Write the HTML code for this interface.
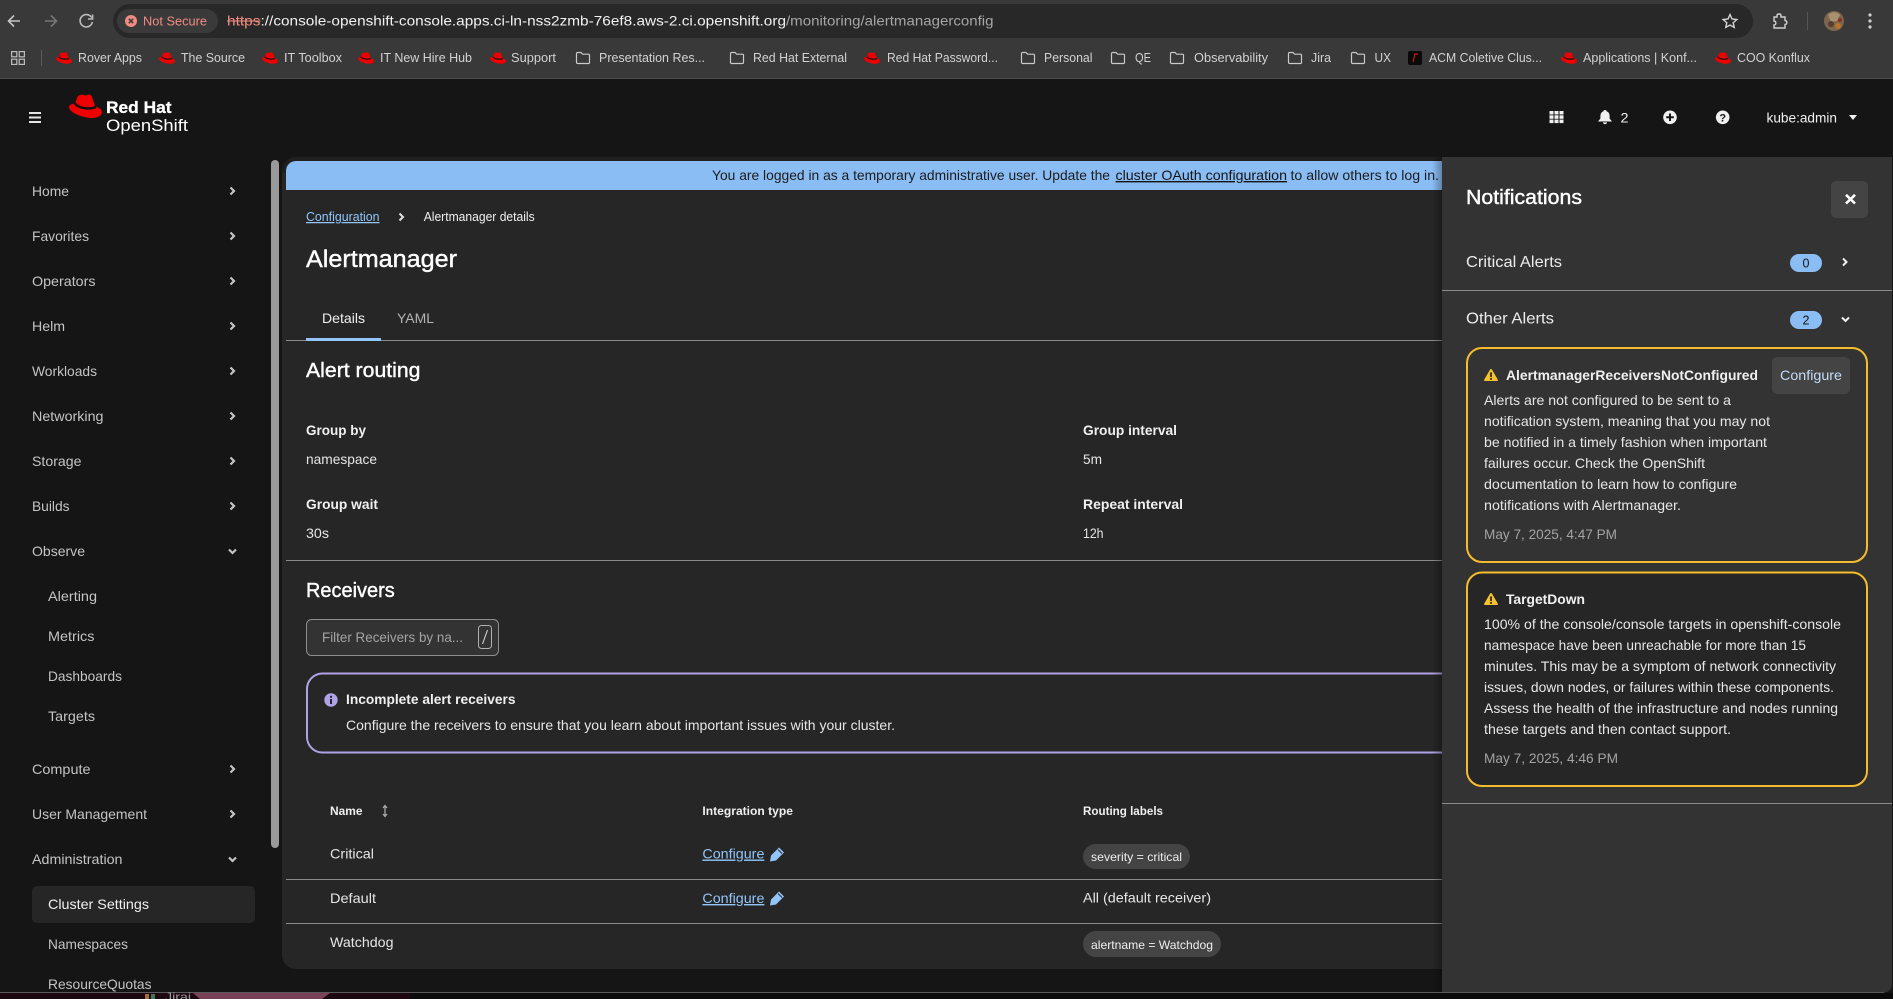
<!DOCTYPE html>
<html lang="en">
<head>
<meta charset="utf-8">
<title>Alertmanager · OpenShift</title>
<style>
html,body{margin:0;padding:0;background:#151515;width:1893px;height:999px;overflow:hidden}
svg{display:block;position:absolute;left:0;top:0}
text{font-family:"Liberation Sans",sans-serif;white-space:pre}
.bm{font-size:12.5px;fill:#d2d2d2}
.nav{font-size:14px;fill:#c4c4c4}
.sub{font-size:14px;fill:#c4c4c4}
.b{font-size:14px;fill:#e6e6e6}
.t{font-size:14px;fill:#f0f0f0;font-weight:700}
.h{fill:#fff;stroke:#fff;stroke-width:.4}
.g{font-size:14px;fill:#a3a3a3}
.link{font-size:14px;fill:#92c5f9;text-decoration:underline}
.th{font-size:12px;fill:#eee;font-weight:700}
.chev{fill:none;stroke:#c4c4c4;stroke-width:2.2}
.fold{fill:none;stroke:#c9c9c9;stroke-width:1.2}
.ln{fill:#8a8a8a}
</style>
</head>
<body>
<svg width="1893" height="999" viewBox="0 0 1893 999" xmlns="http://www.w3.org/2000/svg">
<defs>
<symbol id="hat" viewBox="0 0 33 24" overflow="visible">
<path fill="#ee0000" d="M11 1C14 0 15 1.500 17 1.500 19 0 22 0 23 3L26 12C29 13.500 33 15 33 18 33 22 28 24 23 24 15 24 0 19 0 13 0 11 3 9.500 6 10L8 4C8.500 2.500 9.500 1.500 11 1Z"/>
<path fill="none" stroke="#111" stroke-width="2.400" d="M6 9.500C9 14 20 16 27 13"/>
</symbol>
<symbol id="folder" viewBox="0 0 16 14" overflow="visible">
<path class="fold" d="M1.5 2.6C1.5 1.9 2 1.5 2.6 1.5H6L7.6 3.2H13.4C14 3.2 14.5 3.7 14.5 4.3V11.4C14.5 12 14 12.5 13.4 12.5H2.6C2 12.5 1.5 12 1.5 11.4Z"/>
</symbol>
<symbol id="warn" viewBox="0 0 14 12" overflow="visible">
<path fill="#f5c12e" d="M7 0C7.4 0 7.7.2 7.9.5L13.8 10.6C14.2 11.2 13.7 12 13 12H1C.3 12-.2 11.2.2 10.6L6.1.5C6.3.2 6.6 0 7 0Z"/>
<rect x="6.1" y="3.4" width="1.8" height="4.6" fill="#2a2a2a"/>
<rect x="6.1" y="9" width="1.8" height="1.8" fill="#2a2a2a"/>
</symbol>
<linearGradient id="sh" x1="0" x2="1" y1="0" y2="0"><stop offset="0" stop-color="#000" stop-opacity="0"/><stop offset="1" stop-color="#000" stop-opacity=".3"/></linearGradient>
</defs>

<!-- Browser chrome -->
<rect width="1893" height="79" fill="#393939"/>
<rect y="78" width="1893" height="1" fill="#4c4c4c"/>
<path d="M20 21H9M14 15.5L8.5 21 14 26.5" fill="none" stroke="#c4c4c4" stroke-width="1.6"/>
<path d="M45 21H56M51 15.5L56.5 21 51 26.5" fill="none" stroke="#777" stroke-width="1.6"/>
<path d="M91.6 17.5A6.2 6.2 0 1 0 92.4 22" fill="none" stroke="#bdbdbd" stroke-width="1.6"/>
<path d="M92.6 14.5V19H88" fill="none" stroke="#bdbdbd" stroke-width="1.6"/>
<rect x="113" y="4" width="1640" height="34" rx="17" fill="#282828"/>
<rect x="117" y="9" width="101" height="24" rx="12" fill="#3a3a3a"/>
<circle cx="131" cy="21" r="6" fill="#f28b82"/>
<path d="M128.8 18.8L133.2 23.2M133.2 18.8L128.8 23.2" stroke="#3a3a3a" stroke-width="1.5"/>
<text x="143" y="25.5" font-size="13" fill="#f28b82" textLength="64" lengthAdjust="spacingAndGlyphs">Not Secure</text>
<text x="227" y="25.5" font-size="14" fill="#f28b82" textLength="33.5" lengthAdjust="spacingAndGlyphs">https</text>
<rect x="227" y="20.5" width="33.5" height="1" fill="#f28b82"/>
<text x="260.5" y="25.5" font-size="14" fill="#f1f1f1" textLength="525.5" lengthAdjust="spacingAndGlyphs">://console-openshift-console.apps.ci-ln-nss2zmb-76ef8.aws-2.ci.openshift.org</text>
<text x="786" y="25.5" font-size="14" fill="#a6a6a6" textLength="207.5" lengthAdjust="spacingAndGlyphs">/monitoring/alertmanagerconfig</text>
<path d="M1730 14.5L1732 19 1736.8 19.5 1733.2 22.7 1734.2 27.4 1730 25 1725.8 27.4 1726.8 22.7 1723.2 19.5 1728 19Z" fill="none" stroke="#d5d5d5" stroke-width="1.4"/>
<path d="M1774 17H1777V15.5C1777 13.5 1781 13.5 1781 15.5V17H1785V20.5C1787.5 20.5 1787.5 24.5 1785 24.5V28H1774V25C1776.5 25 1776.5 21 1774 21Z" fill="none" stroke="#d0d0d0" stroke-width="1.4"/>
<rect x="1807" y="12" width="1" height="18" fill="#555"/>
<circle cx="1834" cy="21" r="10" fill="#7d6650"/>
<path d="M1828 15a8 8 0 0 1 12 0l-3 6-6 1z" fill="#a8916f"/>
<circle cx="1831" cy="24" r="3" fill="#5b3c33"/>
<circle cx="1838" cy="26" r="3" fill="#b7742a"/>
<circle cx="1840" cy="20" r="2" fill="#8a2f28"/>
<circle cx="1870" cy="15" r="1.6" fill="#d0d0d0"/><circle cx="1870" cy="21" r="1.6" fill="#d0d0d0"/><circle cx="1870" cy="27" r="1.6" fill="#d0d0d0"/>

<!-- Bookmarks -->
<g fill="none" stroke="#bdbdbd" stroke-width="1.2"><rect x="11.6" y="51.6" width="5.2" height="5.2"/><rect x="19.2" y="51.6" width="5.2" height="5.2"/><rect x="11.6" y="59.2" width="5.2" height="5.2"/><rect x="19.2" y="59.2" width="5.2" height="5.2"/></g>
<rect x="41" y="50" width="1" height="16" fill="#5c5c5c"/>
<use href="#hat" x="56" y="52" width="16" height="12"/><text class="bm" x="78" y="62" textLength="64" lengthAdjust="spacingAndGlyphs">Rover Apps</text>
<use href="#hat" x="159" y="52" width="16" height="12"/><text class="bm" x="181" y="62" textLength="64" lengthAdjust="spacingAndGlyphs">The Source</text>
<use href="#hat" x="262" y="52" width="16" height="12"/><text class="bm" x="284" y="62" textLength="58" lengthAdjust="spacingAndGlyphs">IT Toolbox</text>
<use href="#hat" x="358" y="52" width="16" height="12"/><text class="bm" x="380" y="62" textLength="92" lengthAdjust="spacingAndGlyphs">IT New Hire Hub</text>
<use href="#hat" x="490" y="52" width="16" height="12"/><text class="bm" x="511" y="62" textLength="45" lengthAdjust="spacingAndGlyphs">Support</text>
<use href="#folder" x="575" y="51" width="16" height="14"/><text class="bm" x="599" y="62" textLength="106" lengthAdjust="spacingAndGlyphs">Presentation Res...</text>
<use href="#folder" x="729" y="51" width="16" height="14"/><text class="bm" x="753" y="62" textLength="94" lengthAdjust="spacingAndGlyphs">Red Hat External</text>
<use href="#hat" x="864" y="52" width="16" height="12"/><text class="bm" x="887" y="62" textLength="111" lengthAdjust="spacingAndGlyphs">Red Hat Password...</text>
<use href="#folder" x="1020" y="51" width="16" height="14"/><text class="bm" x="1044" y="62" textLength="48.5" lengthAdjust="spacingAndGlyphs">Personal</text>
<use href="#folder" x="1110" y="51" width="16" height="14"/><text class="bm" x="1135" y="62" textLength="16" lengthAdjust="spacingAndGlyphs">QE</text>
<use href="#folder" x="1169" y="51" width="16" height="14"/><text class="bm" x="1194" y="62" textLength="74" lengthAdjust="spacingAndGlyphs">Observability</text>
<use href="#folder" x="1287" y="51" width="16" height="14"/><text class="bm" x="1311" y="62" textLength="20" lengthAdjust="spacingAndGlyphs">Jira</text>
<use href="#folder" x="1350" y="51" width="16" height="14"/><text class="bm" x="1374.5" y="62" textLength="16.5" lengthAdjust="spacingAndGlyphs">UX</text>
<rect x="1408" y="51" width="14" height="14" rx="2" fill="#0a0a0a"/><path d="M1413 62L1415 54H1418" fill="none" stroke="#c9190b" stroke-width="1.2"/>
<text class="bm" x="1429" y="62" textLength="113" lengthAdjust="spacingAndGlyphs">ACM Coletive Clus...</text>
<use href="#hat" x="1561" y="52" width="16" height="12"/><text class="bm" x="1583" y="62" textLength="114" lengthAdjust="spacingAndGlyphs">Applications | Konf...</text>
<use href="#hat" x="1715" y="52" width="16" height="12"/><text class="bm" x="1737" y="62" textLength="73" lengthAdjust="spacingAndGlyphs">COO Konflux</text>

<!-- Masthead -->
<rect x="0" y="79" width="1893" height="913" fill="#151515"/>
<rect x="29" y="112" width="12" height="2" fill="#e6e6e6"/><rect x="29" y="116.5" width="12" height="2" fill="#e6e6e6"/><rect x="29" y="121" width="12" height="2" fill="#e6e6e6"/>
<use href="#hat" x="69" y="94" width="33" height="24"/>
<text x="106" y="113" font-size="17" font-weight="700" fill="#fff" stroke="#fff" stroke-width=".3" textLength="65.5" lengthAdjust="spacingAndGlyphs">Red Hat</text>
<text x="106" y="131" font-size="17" fill="#fff" textLength="82" lengthAdjust="spacingAndGlyphs">OpenShift</text>
<g fill="#f0f0f0">
<rect x="1549.5" y="111" width="4" height="3.5"/><rect x="1554.5" y="111" width="4" height="3.5"/><rect x="1559.5" y="111" width="4" height="3.5"/>
<rect x="1549.5" y="115.3" width="4" height="3.5"/><rect x="1554.5" y="115.3" width="4" height="3.5"/><rect x="1559.5" y="115.3" width="4" height="3.5"/>
<rect x="1549.5" y="119.6" width="4" height="3.5"/><rect x="1554.5" y="119.6" width="4" height="3.5"/><rect x="1559.5" y="119.6" width="4" height="3.5"/>
<path d="M1605 110C1606 110 1606.6 110.6 1606.6 111.4 1608.6 112 1609.6 113.6 1609.6 116V118.5L1612 121.5H1598L1600.4 118.5V116C1600.4 113.6 1601.4 112 1603.4 111.4 1603.4 110.6 1604 110 1605 110Z"/>
<path d="M1603 122.4H1607C1607 123.5 1606 124.2 1605 124.2S1603 123.5 1603 122.4Z"/>
<circle cx="1670" cy="117.3" r="6.8"/>
<circle cx="1722.7" cy="117.3" r="6.8"/>
<path d="M1849 115H1857L1853 120Z"/>
</g>
<path d="M1670 113.5V121M1666.2 117.3H1673.8" stroke="#151515" stroke-width="2"/>
<text x="1722.7" y="121.3" font-size="11" font-weight="700" text-anchor="middle" fill="#151515">?</text>
<text x="1620.5" y="122.7" font-size="14" fill="#f0f0f0" textLength="8" lengthAdjust="spacingAndGlyphs">2</text>
<text x="1766.5" y="122.5" font-size="14" fill="#f0f0f0" textLength="70.5" lengthAdjust="spacingAndGlyphs">kube:admin</text>

<!-- Sidebar -->
<text class="nav" x="32" y="196" textLength="37" lengthAdjust="spacingAndGlyphs">Home</text>
<text class="nav" x="32" y="241" textLength="57" lengthAdjust="spacingAndGlyphs">Favorites</text>
<text class="nav" x="32" y="286" textLength="63.5" lengthAdjust="spacingAndGlyphs">Operators</text>
<text class="nav" x="32" y="331" textLength="33" lengthAdjust="spacingAndGlyphs">Helm</text>
<text class="nav" x="32" y="376" textLength="65" lengthAdjust="spacingAndGlyphs">Workloads</text>
<text class="nav" x="32" y="421" textLength="71.5" lengthAdjust="spacingAndGlyphs">Networking</text>
<text class="nav" x="32" y="466" textLength="49.5" lengthAdjust="spacingAndGlyphs">Storage</text>
<text class="nav" x="32" y="511" textLength="37.5" lengthAdjust="spacingAndGlyphs">Builds</text>
<text class="nav" x="32" y="556" textLength="53" lengthAdjust="spacingAndGlyphs">Observe</text>
<text class="sub" x="48" y="601" textLength="49" lengthAdjust="spacingAndGlyphs">Alerting</text>
<text class="sub" x="48" y="641" textLength="46.5" lengthAdjust="spacingAndGlyphs">Metrics</text>
<text class="sub" x="48" y="681" textLength="74" lengthAdjust="spacingAndGlyphs">Dashboards</text>
<text class="sub" x="48" y="721" textLength="47" lengthAdjust="spacingAndGlyphs">Targets</text>
<text class="nav" x="32" y="774" textLength="58.5" lengthAdjust="spacingAndGlyphs">Compute</text>
<text class="nav" x="32" y="819" textLength="115" lengthAdjust="spacingAndGlyphs">User Management</text>
<text class="nav" x="32" y="864" textLength="90.5" lengthAdjust="spacingAndGlyphs">Administration</text>
<rect x="32" y="886" width="223" height="37" rx="5" fill="#262626"/>
<text x="48" y="909" font-size="14" fill="#f0f0f0" textLength="101" lengthAdjust="spacingAndGlyphs">Cluster Settings</text>
<text class="sub" x="48" y="949" textLength="80" lengthAdjust="spacingAndGlyphs">Namespaces</text>
<text class="sub" x="48" y="989" textLength="103.5" lengthAdjust="spacingAndGlyphs">ResourceQuotas</text>
<g class="chev">
<path d="M230.5 187.500L234 191 230.500 194.500M230.500 232.500L234 236 230.500 239.500M230.500 277.500L234 281 230.500 284.500M230.500 322.500L234 326 230.500 329.500M230.500 367.500L234 371 230.500 374.500M230.500 412.500L234 416 230.500 419.500M230.500 457.500L234 461 230.500 464.500M230.500 502.500L234 506 230.500 509.500M230.500 765.500L234 769 230.500 772.500M230.500 810.500L234 814 230.500 817.500"/>
<path d="M229 549.500L232.500 553 236 549.500M229 857.500L232.500 861 236 857.500"/>
</g>
<rect x="271" y="160" width="8" height="688" rx="4" fill="#9a9a9a"/>

<!-- Main card -->
<rect x="282" y="157" width="1200" height="812" rx="14" fill="#202020"/>
<path d="M286 173A12 12 0 0 1 298 161H1482V969H296A14 14 0 0 1 282 955V173Z" fill="#262626"/>
<path d="M286 171A10 10 0 0 1 296 161H1442V190H286Z" fill="#8bbdf5"/>
<text x="712" y="180" font-size="14" fill="#1c1c1c" textLength="398" lengthAdjust="spacingAndGlyphs">You are logged in as a temporary administrative user. Update the</text>
<text x="1115.5" y="180" font-size="14" fill="#151515" text-decoration="underline" textLength="171.5" lengthAdjust="spacingAndGlyphs">cluster OAuth configuration</text>
<text x="1290.5" y="180" font-size="14" fill="#1c1c1c" textLength="148.5" lengthAdjust="spacingAndGlyphs">to allow others to log in.</text>

<text x="306" y="221" font-size="12.5" fill="#92c5f9" text-decoration="underline" textLength="73.5" lengthAdjust="spacingAndGlyphs">Configuration</text>
<path d="M399.5 213.500L403 217 399.500 220.500" fill="none" stroke="#e0e0e0" stroke-width="2"/>
<text x="423.7" y="221" font-size="12.5" fill="#f0f0f0" textLength="111" lengthAdjust="spacingAndGlyphs">Alertmanager details</text>
<text class="h" x="306" y="267" font-size="24" textLength="151" lengthAdjust="spacingAndGlyphs">Alertmanager</text>

<text x="322" y="323" font-size="14" fill="#f0f0f0" textLength="43" lengthAdjust="spacingAndGlyphs">Details</text>
<text x="397" y="323" font-size="14" fill="#b4b4b4" textLength="37" lengthAdjust="spacingAndGlyphs">YAML</text>
<rect class="ln" x="286" y="340" width="1156" height="1"/>
<rect x="306" y="338" width="75" height="3" fill="#92c5f9"/>

<text class="h" x="306" y="377" font-size="20" textLength="114.5" lengthAdjust="spacingAndGlyphs">Alert routing</text>
<text class="t" x="306" y="435" textLength="60" lengthAdjust="spacingAndGlyphs">Group by</text>
<text class="b" x="306" y="464" textLength="71" lengthAdjust="spacingAndGlyphs">namespace</text>
<text class="t" x="306" y="509" textLength="72" lengthAdjust="spacingAndGlyphs">Group wait</text>
<text class="b" x="306" y="538" textLength="23" lengthAdjust="spacingAndGlyphs">30s</text>
<text class="t" x="1083" y="435" textLength="94" lengthAdjust="spacingAndGlyphs">Group interval</text>
<text class="b" x="1083" y="464" textLength="19" lengthAdjust="spacingAndGlyphs">5m</text>
<text class="t" x="1083" y="509" textLength="100" lengthAdjust="spacingAndGlyphs">Repeat interval</text>
<text class="b" x="1083" y="538" textLength="20.5" lengthAdjust="spacingAndGlyphs">12h</text>
<rect class="ln" x="286" y="560" width="1156" height="1"/>

<text class="h" x="306" y="597" font-size="20" textLength="88.7" lengthAdjust="spacingAndGlyphs">Receivers</text>
<rect x="306.5" y="619.5" width="192" height="36" rx="5" fill="#333" stroke="#8f8f8f"/>
<text class="g" x="322" y="642" textLength="141" lengthAdjust="spacingAndGlyphs">Filter Receivers by na...</text>
<rect x="478.5" y="625.5" width="13" height="23" rx="3" fill="none" stroke="#b0b0b0"/>
<path d="M482.5 644L487.5 630" stroke="#d0d0d0" stroke-width="1.1"/>

<path d="M1442 673.5H322A15.500 15.500 0 0 0 307 689V737A15.500 15.500 0 0 0 322 752.500H1442" fill="none" stroke="#b0a2e6" stroke-width="2"/>
<circle cx="331" cy="700" r="6.7" fill="#b0a2e6"/>
<rect x="330" y="699" width="2" height="5" fill="#262626"/><rect x="330" y="695.800" width="2" height="2" fill="#262626"/>
<text class="t" x="346" y="704" fill="#fff" textLength="169.500" lengthAdjust="spacingAndGlyphs">Incomplete alert receivers</text>
<text class="b" x="346" y="730" textLength="549" lengthAdjust="spacingAndGlyphs">Configure the receivers to ensure that you learn about important issues with your cluster.</text>

<text class="th" x="330" y="815" textLength="32.500" lengthAdjust="spacingAndGlyphs">Name</text>
<path d="M385 806V816M383 808L385 805.500 387 808M383 814L385 816.500 387 814" fill="none" stroke="#a8a8a8" stroke-width="1.300"/>
<text class="th" x="702.400" y="815" textLength="90.600" lengthAdjust="spacingAndGlyphs">Integration type</text>
<text class="th" x="1083" y="815" textLength="80" lengthAdjust="spacingAndGlyphs">Routing labels</text>

<text class="b" x="330" y="858.500" textLength="44" lengthAdjust="spacingAndGlyphs">Critical</text>
<text class="link" x="702.400" y="858.500" textLength="62" lengthAdjust="spacingAndGlyphs">Configure</text>
<path d="M770 861.500L771 855.500 779 847.500 784 852.500 776 860.500Z" fill="#92c5f9"/>
<path d="M778 849.500L782 853.500" stroke="#262626" stroke-width="1"/>
<rect x="1083" y="844" width="107" height="25" rx="12.500" fill="#444"/>
<text x="1091" y="861" font-size="12" fill="#eee" textLength="91" lengthAdjust="spacingAndGlyphs">severity = critical</text>
<rect class="ln" x="286" y="879" width="1156" height="1"/>

<text class="b" x="330" y="903" textLength="46" lengthAdjust="spacingAndGlyphs">Default</text>
<text class="link" x="702.400" y="903" textLength="62" lengthAdjust="spacingAndGlyphs">Configure</text>
<path d="M770 905.500L771 899.500 779 891.500 784 896.500 776 904.500Z" fill="#92c5f9"/>
<path d="M778 893.500L782 897.500" stroke="#262626" stroke-width="1"/>
<text class="b" x="1083" y="902.500" textLength="128" lengthAdjust="spacingAndGlyphs">All (default receiver)</text>
<rect class="ln" x="286" y="923" width="1156" height="1"/>

<text class="b" x="330" y="947" textLength="63.500" lengthAdjust="spacingAndGlyphs">Watchdog</text>
<rect x="1083" y="931" width="138" height="26" rx="13" fill="#444"/>
<text x="1091" y="949" font-size="12" fill="#eee" textLength="122" lengthAdjust="spacingAndGlyphs">alertname = Watchdog</text>

<!-- Notifications panel -->
<rect x="1432" y="157" width="10" height="812" fill="url(#sh)"/>
<rect x="1432" y="969" width="10" height="23" fill="url(#sh)"/>
<path d="M1442 157H1892V984A8 8 0 0 1 1884 992.500H1442Z" fill="#333"/>
<text class="h" x="1466" y="204" font-size="20" textLength="116" lengthAdjust="spacingAndGlyphs">Notifications</text>
<rect x="1831" y="181" width="37" height="37" rx="5" fill="#444"/>
<path d="M1846 194.800L1855 203.500M1855 194.800L1846 203.500" stroke="#fff" stroke-width="2.600"/>
<text x="1466" y="267" font-size="16" fill="#ececec" textLength="96" lengthAdjust="spacingAndGlyphs">Critical Alerts</text>
<rect x="1790" y="254" width="32" height="18" rx="9" fill="#8bbdf5"/>
<text x="1806" y="267.500" font-size="12.500" fill="#151515" text-anchor="middle">0</text>
<path d="M1843 258.500L1846.500 262 1843 265.500" fill="none" stroke="#f0f0f0" stroke-width="2"/>
<rect class="ln" x="1442" y="290" width="450" height="1"/>
<text x="1466" y="323.500" font-size="16" fill="#ececec" textLength="88" lengthAdjust="spacingAndGlyphs">Other Alerts</text>
<rect x="1790" y="311" width="32" height="18" rx="9" fill="#8bbdf5"/>
<text x="1806" y="324.500" font-size="12.500" fill="#151515" text-anchor="middle">2</text>
<path d="M1842 317.500L1845.500 321 1849 317.500" fill="none" stroke="#f0f0f0" stroke-width="2"/>

<rect x="1467" y="348" width="400" height="214" rx="15" fill="#333" stroke="#f5bd2e" stroke-width="2"/>
<use href="#warn" x="1484" y="369" width="14" height="12"/>
<text class="t" x="1506" y="380" fill="#fff" textLength="252" lengthAdjust="spacingAndGlyphs">AlertmanagerReceiversNotConfigured</text>
<rect x="1772" y="357" width="78" height="37" rx="5" fill="#444"/>
<text x="1780" y="380" font-size="14" fill="#c4dcf5" textLength="62" lengthAdjust="spacingAndGlyphs">Configure</text>
<text class="b" x="1484" y="405" textLength="247" lengthAdjust="spacingAndGlyphs">Alerts are not configured to be sent to a</text>
<text class="b" x="1484" y="426" textLength="286" lengthAdjust="spacingAndGlyphs">notification system, meaning that you may not</text>
<text class="b" x="1484" y="447" textLength="283" lengthAdjust="spacingAndGlyphs">be notified in a timely fashion when important</text>
<text class="b" x="1484" y="468" textLength="221" lengthAdjust="spacingAndGlyphs">failures occur. Check the OpenShift</text>
<text class="b" x="1484" y="489" textLength="253" lengthAdjust="spacingAndGlyphs">documentation to learn how to configure</text>
<text class="b" x="1484" y="510" textLength="197" lengthAdjust="spacingAndGlyphs">notifications with Alertmanager.</text>
<text class="g" x="1484" y="539" textLength="133" lengthAdjust="spacingAndGlyphs">May 7, 2025, 4:47 PM</text>

<rect x="1467" y="572.500" width="400" height="213.500" rx="15" fill="#262626" stroke="#f5bd2e" stroke-width="2"/>
<use href="#warn" x="1484" y="593" width="14" height="12"/>
<text class="t" x="1506" y="604" fill="#fff" textLength="79" lengthAdjust="spacingAndGlyphs">TargetDown</text>
<text class="b" x="1484" y="629" textLength="357" lengthAdjust="spacingAndGlyphs">100% of the console/console targets in openshift-console</text>
<text class="b" x="1484" y="650" textLength="322" lengthAdjust="spacingAndGlyphs">namespace have been unreachable for more than 15</text>
<text class="b" x="1484" y="671" textLength="352" lengthAdjust="spacingAndGlyphs">minutes. This may be a symptom of network connectivity</text>
<text class="b" x="1484" y="692" textLength="350" lengthAdjust="spacingAndGlyphs">issues, down nodes, or failures within these components.</text>
<text class="b" x="1484" y="713" textLength="354" lengthAdjust="spacingAndGlyphs">Assess the health of the infrastructure and nodes running</text>
<text class="b" x="1484" y="734" textLength="247" lengthAdjust="spacingAndGlyphs">these targets and then contact support.</text>
<text class="g" x="1484" y="763" textLength="134" lengthAdjust="spacingAndGlyphs">May 7, 2025, 4:46 PM</text>
<rect class="ln" x="1442" y="803" width="450" height="1"/>

<!-- Desktop strip below window -->
<rect x="0" y="993" width="1893" height="6" fill="#0b0b0b"/>
<rect x="0" y="992" width="1884" height="1" fill="#5a5a5a"/>
<rect x="0" y="993" width="410" height="6" fill="#1d0710"/>
<path d="M193 993H330L322 999H200Z" fill="#7a4258"/>
<rect x="145" y="994" width="4" height="5" fill="#a86a3a"/><rect x="151" y="994" width="4" height="5" fill="#3f7a55"/>
<text x="165" y="1001" font-size="12" fill="#9a9a9a" textLength="26" lengthAdjust="spacingAndGlyphs">Jirai</text>
</svg>
</body>
</html>
